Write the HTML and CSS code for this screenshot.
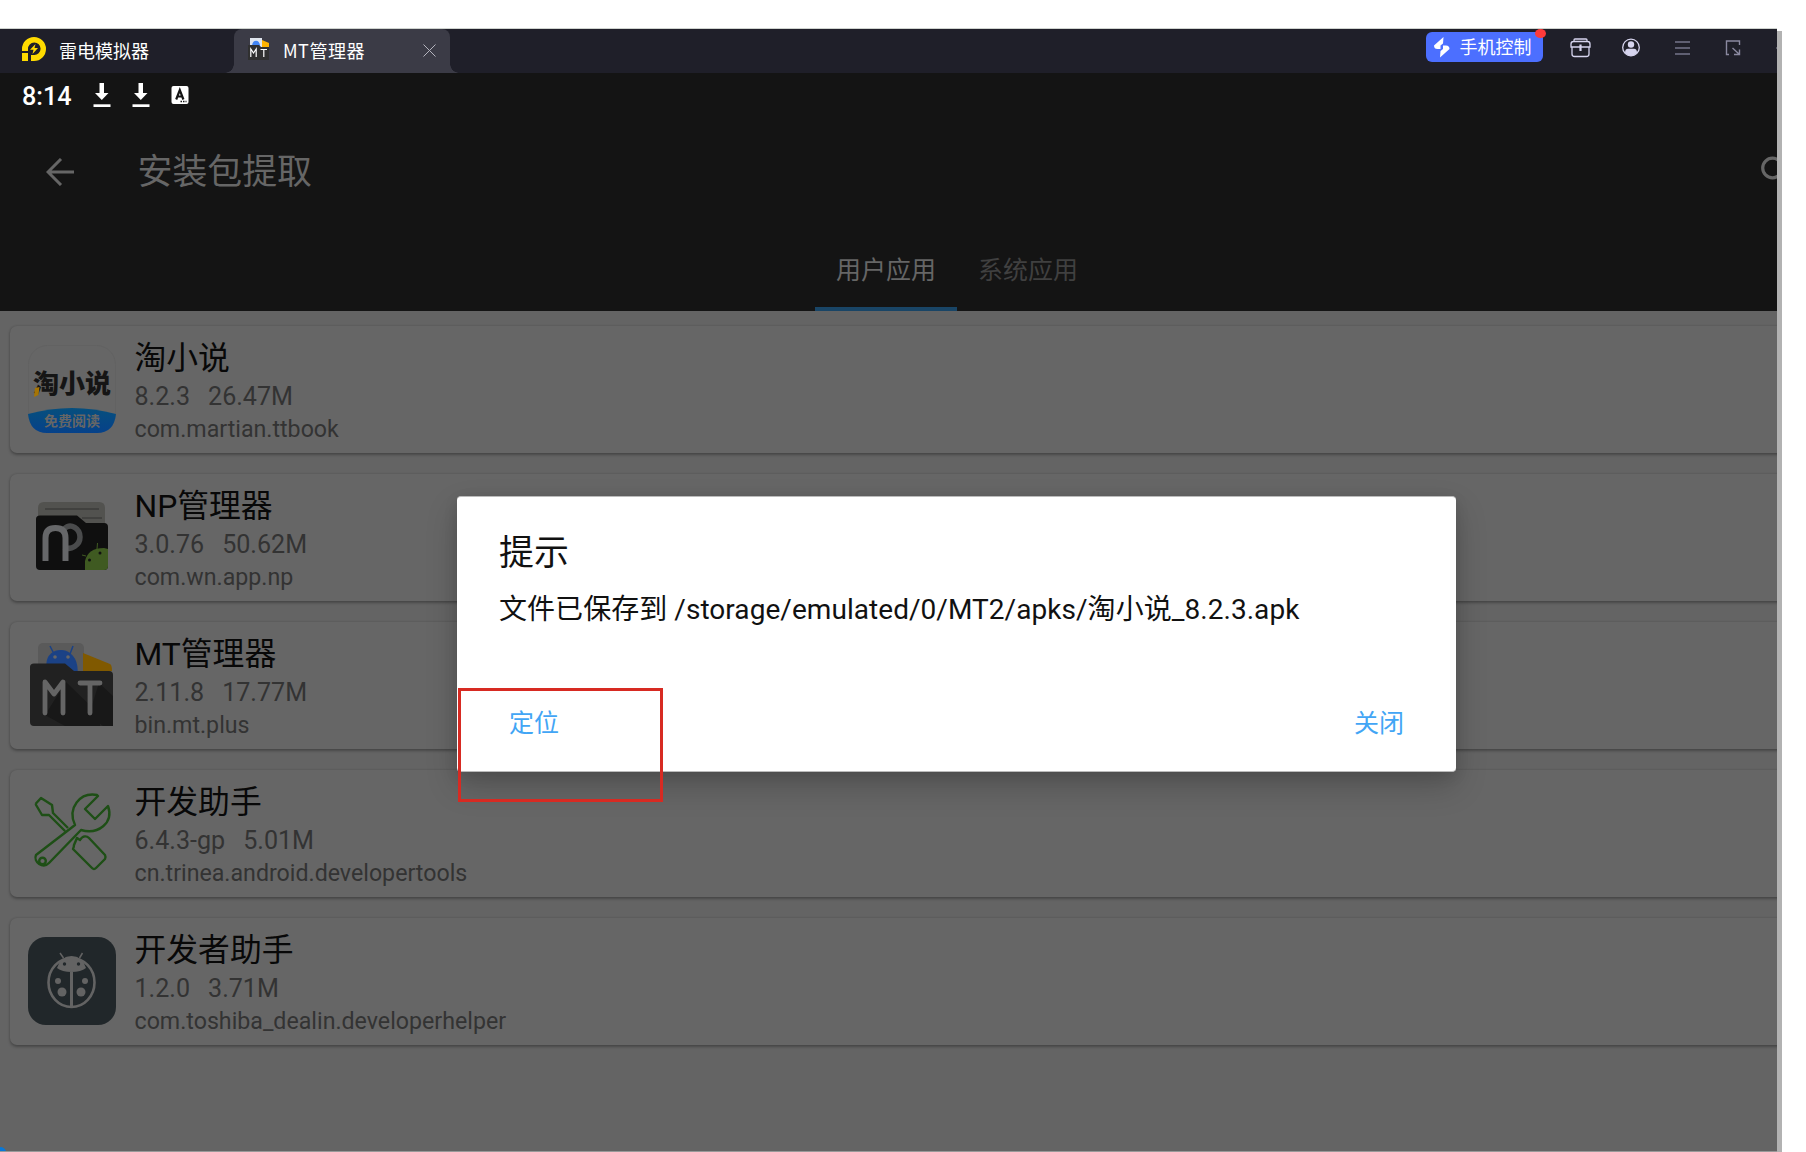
FILE: index.html
```
<!DOCTYPE html>
<html lang="zh-CN">
<head>
<meta charset="utf-8">
<title>MT管理器</title>
<link rel="stylesheet" href="styles.css">
</head>
<body>
<div class="stage">
<div class="window">
  <header class="titlebar">
    <div class="home-tab">
      <svg class="ld-logo" width="24" height="24" viewBox="0 0 24 24"><path d="M0 14V12A12 12 0 1 1 12 24H9V18H12A6.300 6.300 0 1 0 6 12V14Z" fill="#ffdb00"/><rect y="16" width="6" height="8" fill="#ffdb00"/><path d="M13.500 7 8 12.800H11.500L10.500 17 16 11H12.500Z" fill="#ffdb00"/></svg>
      <span>雷电模拟器</span>
    </div>
    <div class="app-tab">
      <svg class="tab-icon" width="22" height="23" viewBox="0 0 22 23"><rect x="2" width="12" height="9" fill="#dfe5ee"/><path d="M4 8C4 1 12 1 12 8Z" fill="#4285f4"/><path d="M14 2 21 5V9H14Z" fill="#ffb300"/><path d="M0 7H11L13 9H21V22H0Z" fill="#303030"/><path d="M2.800 19V11L5.500 15 8.200 11V19M12.500 11.500H19M15.800 11.500V19" fill="none" stroke="#fff" stroke-width="1.200"/></svg>
      <span>MT管理器</span>
      <svg class="close" width="13" height="13" viewBox="0 0 13 13"><path d="M.5.5 12.500 12.500M12.500.5.5 12.500" stroke="#b4b4be" stroke-width="1"/></svg>
    </div>
    <div class="tools">
      <div class="control">
        <svg width="16" height="21" viewBox="0 0 16 21"><path d="M9.500 0 0 8.500Q0 12 3.500 12H6.500V8.500L9 6.500ZM6 20.500 15.500 12Q15.500 8.500 12 8.500H9V12L6.500 14Z" fill="#fff"/></svg>
        <span>手机控制</span>
        <i class="badge"></i>
      </div>
      <svg class="t-box" width="21" height="20" viewBox="0 0 21 20" fill="none" stroke="#d6d4ee" stroke-width="1.300"><path d="M4 3V2Q4 1 5 1H16Q17 1 17 2V3M1 9V6Q1 3.500 3.500 3.500H17.500Q20 3.500 20 6V9ZM2 9V16Q2 18.500 4.500 18.500H16.500Q19 18.500 19 16V9"/><path d="M10.500 6.500V13" stroke-width="2.200"/></svg>
      <svg class="t-user" width="18" height="19" viewBox="0 0 18 19"><circle cx="9" cy="9.500" r="8.300" fill="none" stroke="#d6d4ee" stroke-width="1.300"/><circle cx="9" cy="6.500" r="3.200" fill="#d6d4ee"/><path d="M3 15Q3 10.800 6 10.800H12Q15 10.800 15 15 12 18 9 18T3 15Z" fill="#d6d4ee"/></svg>
      <svg class="t-menu" width="15" height="14" viewBox="0 0 15 14" stroke="#76758a" stroke-width="1.600"><path d="M0 1H15M0 7H15M0 13H15"/></svg>
      <svg class="t-size" width="16" height="16" viewBox="0 0 16 16" fill="none" stroke="#8a89a0" stroke-width="1.400"><path d="M4 14.500H1.500V1H14.500V5M7.500 8 14 14M14.500 9.500V14.500H9"/></svg>
      <i class="t-more"></i>
    </div>
  </header>

  <div class="appbar">
    <div class="status">
      <span class="clock">8:14</span>
      <svg width="18" height="25" viewBox="0 0 18 25" fill="#fff"><path d="M6.500 0H11V10H15.500L8.800 17 2 10H6.500Z"/><path d="M.500 21.300H17.500V24H.500Z"/></svg>
      <svg width="18" height="25" viewBox="0 0 18 25" fill="#fff"><path d="M6.500 0H11V10H15.500L8.800 17 2 10H6.500Z"/><path d="M.500 21.300H17.500V24H.500Z"/></svg>
      <svg width="18" height="25" viewBox="0 0 18 25"><rect x=".5" y="3" width="17" height="18" rx="2" fill="#fff"/><path d="M5.200 16.500 8.800 7 12.400 16.500M6.500 13.500H11" fill="none" stroke="#141414" stroke-width="2.200"/><path d="M9.500 18.500H15.500" stroke="#141414" stroke-width="1.500" stroke-dasharray="1.500 1"/></svg>
    </div>
    <div class="toolbar">
      <svg class="back" width="28" height="28" viewBox="0 0 28 28" fill="none" stroke="#666" stroke-width="3"><path d="M28 14H2.500M15 1 2 14 15 27"/></svg>
      <h1>安装包提取</h1>
      <svg class="search" width="16" height="24" viewBox="0 0 16 24"><circle cx="11.500" cy="12" r="9.800" fill="none" stroke="#666" stroke-width="3.200"/></svg>
    </div>
    <nav class="tabs">
      <span class="tab active">用户应用</span>
      <span class="tab">系统应用</span>
    </nav>
  </div>

  <main class="list">
    <section class="card">
      <div class="icon novel"><b>淘小说</b><em>免费阅读</em>
        <svg width="88" height="88" viewBox="0 0 88 88"><defs><linearGradient id="sea" x2="0" y2="1"><stop stop-color="#064f7d"/><stop offset="1" stop-color="#06418a"/></linearGradient></defs><rect x=".5" y=".5" width="87" height="87" rx="19" fill="none" stroke="#626262"/><path d="M0 69Q44 57 88 69Q86 88 69 88H19Q2 88 0 69Z" fill="url(#sea)"/><path d="M7 43 11.500 42 10.500 50 6 52Z" fill="#a67505"/></svg></div>
      <div class="info"><h2>淘小说</h2><p class="ver"><span>8.2.3</span><span>26.47M</span></p><p class="pkg">com.martian.ttbook</p></div>
    </section>
    <section class="card">
      <svg class="icon" width="88" height="88" viewBox="0 0 88 88"><path d="M10 30V15Q10 9 16 9H71Q77 9 77 15V33H10Z" fill="#52524f"/><path d="M17 16H71M54 25H74" stroke="#41413f" stroke-width="2"/><path d="M8 26Q8 22.500 12 22.500H49L58 30H76Q80 30 80 34V73Q80 77 76 77H12Q8 77 8 73Z" fill="#0f0f0f"/><path d="M36 36C43 29 52 36 52 44S43 58 36 54" fill="none" stroke="#4a4b4c" stroke-width="5.500"/><path d="M17.500 68V45Q17.500 35 27.500 35T37.500 45V68" fill="none" stroke="#666769" stroke-width="6"/><path d="M57 77V68Q60 55 76 55L80 56V73Q80 77 76 77Z" fill="#3f5a21"/><path d="M69 56 69.500 50M58 63 54 62" stroke="#3f5a21"/><circle cx="72" cy="60" r="1.500" fill="#111"/><circle cx="61.500" cy="67" r="1.500" fill="#111"/></svg>
      <div class="info"><h2>NP管理器</h2><p class="ver"><span>3.0.76</span><span>50.62M</span></p><p class="pkg">com.wn.app.np</p></div>
    </section>
    <section class="card">
      <svg class="icon" width="88" height="88" viewBox="0 0 88 88"><rect x="10" y="2" width="46" height="40" rx="5" fill="#5a5a5a"/><path d="M19 24C19 4 49 4 49 30H19ZM26 13 22 5M42 13 45 5" fill="#1b4286" stroke="#1b4286" stroke-width="1.500"/><circle cx="27" cy="16" r="1.800" fill="#666"/><circle cx="40" cy="16" r="1.800" fill="#666"/><path d="M55 12 82 23Q84 24 84 30H55Z" fill="#805900"/><path d="M2 26Q2 22.500 6 22.500H37L46 30H81Q85 30 85 34V81Q85 85 81 85H6Q2 85 2 81Z" fill="#212121"/><path d="M38 41 72 74V85H37L17 74ZM71 42 85 55V85H75L61 74Z" fill="#181818"/><path d="M17 72V41L26 53 35 41V72M52 42H72M62 42V72" fill="none" stroke="#656565" stroke-width="4.800" stroke-linejoin="round" stroke-linecap="round"/></svg>
      <div class="info"><h2>MT管理器</h2><p class="ver"><span>2.11.8</span><span>17.77M</span></p><p class="pkg">bin.mt.plus</p></div>
    </section>
    <section class="card">
      <svg class="icon" width="88" height="88" viewBox="0 0 88 88" fill="none" stroke="#1e4f16" stroke-width="2.400" stroke-linejoin="round"><path d="M7.500 15 13 9 24 16 25 24 40 39M37 42 21 26 14 26 7.500 15M47 36C39 19 52 3 69 6L70 7 57 20 67 30 80 17C86 34 70 46 53 41L21 74C15 80 5 73 8 66ZM49 49 52 51C55 46 59 47 61 49L77 66Q78 68 77 70L68 79Q66 81 64 79L45 60Q46 58 46 56Z"/><circle cx="14.500" cy="72" r="3.300"/></svg>
      <div class="info"><h2>开发助手</h2><p class="ver"><span>6.4.3-gp</span><span>5.01M</span></p><p class="pkg">cn.trinea.android.developertools</p></div>
    </section>
    <section class="card">
      <svg class="icon" width="88" height="88" viewBox="0 0 88 88"><rect width="88" height="88" rx="18" fill="#21272a"/><ellipse cx="43.500" cy="45.500" rx="23" ry="24.500" fill="none" stroke="#636363" stroke-width="2.600"/><path d="M29 31Q33 19 43.500 19T58 31Q53 35 43.500 35T29 31Z" fill="#636363"/><path d="M43.500 35V69" stroke="#636363" stroke-width="3"/><path d="M35.500 21 32 16M51.500 21 54.500 16" stroke="#636363" stroke-width="1.500"/><g fill="#636363"><circle cx="30" cy="44" r="3"/><circle cx="57" cy="44" r="3"/><circle cx="34" cy="55" r="4.500"/><circle cx="53" cy="55" r="4.500"/></g><g fill="#21272a"><circle cx="36.500" cy="27" r="1.700"/><circle cx="50.500" cy="27" r="1.700"/></g></svg>
      <div class="info"><h2>开发者助手</h2><p class="ver"><span>1.2.0</span><span>3.71M</span></p><p class="pkg">com.toshiba_dealin.developerhelper</p></div>
    </section>
  </main>
  <i class="corner"></i>
</div>
<div class="edge"></div>

<div class="dialog" role="dialog">
  <h3>提示</h3>
  <p>文件已保存到 /storage/emulated/0/MT2/apks/淘小说_8.2.3.apk</p>
  <div class="actions"><span>定位</span><span>关闭</span></div>
</div>
<div class="marker"></div>
</div>
</body>
</html>
```
FILE: styles.css
```
* { box-sizing: border-box; margin: 0; padding: 0; }
body { background: #fff; font-family: Roboto, "Noto Sans CJK SC", sans-serif; width: 1806px; height: 1152px; overflow: hidden; }
h1, h2, h3 { font-weight: 400; }
svg { display: block; flex: none; }
span, h1, h2, h3, p { white-space: nowrap; }

.stage { position: relative; display: flex; align-items: flex-start; width: 1806px; height: 1152px; padding-top: 28px; }
.window { position: relative; width: 1777px; height: 1124px; overflow: hidden; background: #646464; border-top: 1px solid #cfd3cf; border-bottom: 1px solid #999; }
.edge { width: 5px; height: 1121px; margin-top: 3px; background: #b2b2b2; }

.titlebar { display: flex; height: 44px; background: #1f1f29; color: #fff; font-family: "Noto Sans CJK SC", sans-serif; font-size: 18px; }
.home-tab { display: flex; align-items: center; width: 234px; padding: 0 0 2px 22px; gap: 13px; }
.home-tab .ld-logo { margin-top: -2px; }
.app-tab { position: relative; display: flex; align-items: center; width: 216px; padding: 0 0 2px 14px; border-radius: 8px 8px 0 0; background: #3b3b46; }
.app-tab::before, .app-tab::after { content: ""; position: absolute; bottom: 0; width: 9px; height: 9px; }
.app-tab::before { left: -9px; background: radial-gradient(circle at 0 0, #1f1f29 8.500px, #3b3b46 9px); }
.app-tab::after { right: -9px; background: radial-gradient(circle at 100% 0, #1f1f29 8.500px, #3b3b46 9px); }
.app-tab .tab-icon { margin-top: -1px; }
.app-tab span { margin-left: 13px; letter-spacing: .5px; }
.app-tab .close { margin: 0 14px 0 auto; }
.tools { display: flex; flex: 1; align-items: flex-start; justify-content: flex-end; }
.control { position: relative; display: flex; align-items: center; gap: 10px; width: 117px; height: 30px; margin-top: 3.300px; padding-left: 7.500px; border-radius: 6px; background: #4c6fff; line-height: 28px; }
.control span { margin-top: -2px; }
.badge { position: absolute; top: -3px; right: -3px; width: 11px; height: 9px; border-radius: 50%; background: #ff3a3a; }
.t-box { margin: 9px 0 0 26.500px; }
.t-user { margin: 9px 0 0 31.500px; }
.t-menu { margin: 12px 0 0 34.500px; }
.t-size { margin: 11px 0 0 35.500px; }
.t-more { width: 1px; height: 2px; margin: 18px 0 0 35px; background: #555463; }

.appbar { height: 238px; background: #141414; color: #666; display: flex; flex-direction: column; }
.status { display: flex; align-items: flex-start; height: 50px; padding: 10px 0 0 22px; gap: 21px; color: #fff; }
.clock { width: 50px; font-size: 25.200px; font-weight: 500; line-height: 27px; }
.toolbar { display: flex; align-items: center; height: 96px; padding: 1px 0 0 46px; }
.toolbar h1 { margin: 2px 0 0 63.500px; font-size: 34.900px; line-height: 50px; }
.search { margin: -8px 0 0 auto; }
.tabs { display: flex; height: 92px; padding-left: 815px; }
.tab { width: 142px; height: 92px; text-align: center; font-size: 25px; line-height: 103px; color: #404040; overflow: hidden; }
.active { color: #666; border-bottom: 4px solid #194566; }

.list { display: flex; flex-direction: column; gap: 21px; padding: 15.300px 0 0 10px; }
.card { display: flex; width: 1790px; height: 127px; padding: 11px 0 0 18px; gap: 18.500px; border-radius: 7px; background: #666; box-shadow: 0 1.500px 3px rgba(0,0,0,.28), 0 0 2px rgba(0,0,0,.1); }
.icon { width: 88px; height: 88px; margin-top: 8px; }
.info h2 { font-size: 31.800px; line-height: 42.500px; color: #080808; }
.info p { color: #333; }
.ver { display: flex; gap: 18px; font-size: 25.100px; line-height: 34.500px; }
.pkg { font-size: 23.200px; line-height: 31px; }
.novel { position: relative; }
.novel svg { position: relative; z-index: 1; }
.novel b, .novel em { position: absolute; left: 0; width: 88px; text-align: center; font-style: normal; font-weight: 900; }
.novel b { top: 21px; font-size: 26px; line-height: 36px; color: #151515; }
.novel em { top: 67px; font-size: 14px; line-height: 18px; font-weight: 700; color: #666; z-index: 2; }
.corner { position: absolute; left: -6px; bottom: -6px; width: 12px; height: 10px; border-radius: 50%; background: #0878d8; }

.dialog { position: absolute; left: 457px; top: 496px; width: 998.500px; height: 276px; padding: 33px 51.500px 0 42px; border-radius: 4px; background: #fff; border: 1px solid #bbb; border-width: 1px 0; color: #111; box-shadow: 0 14px 32px rgba(0,0,0,.2), 0 4px 14px rgba(0,0,0,.1); }
.dialog h3 { font-size: 34.900px; line-height: 48px; }
.dialog p { margin-top: 11px; font-size: 28px; line-height: 42px; letter-spacing: .05px; }
.actions { display: flex; justify-content: space-between; padding: 72.500px 0 0 10px; font-size: 25px; line-height: 40px; color: #42a5f5; }
.marker { position: absolute; left: 458px; top: 688px; width: 205px; height: 114px; border: 3px solid #d72a22; }
```
